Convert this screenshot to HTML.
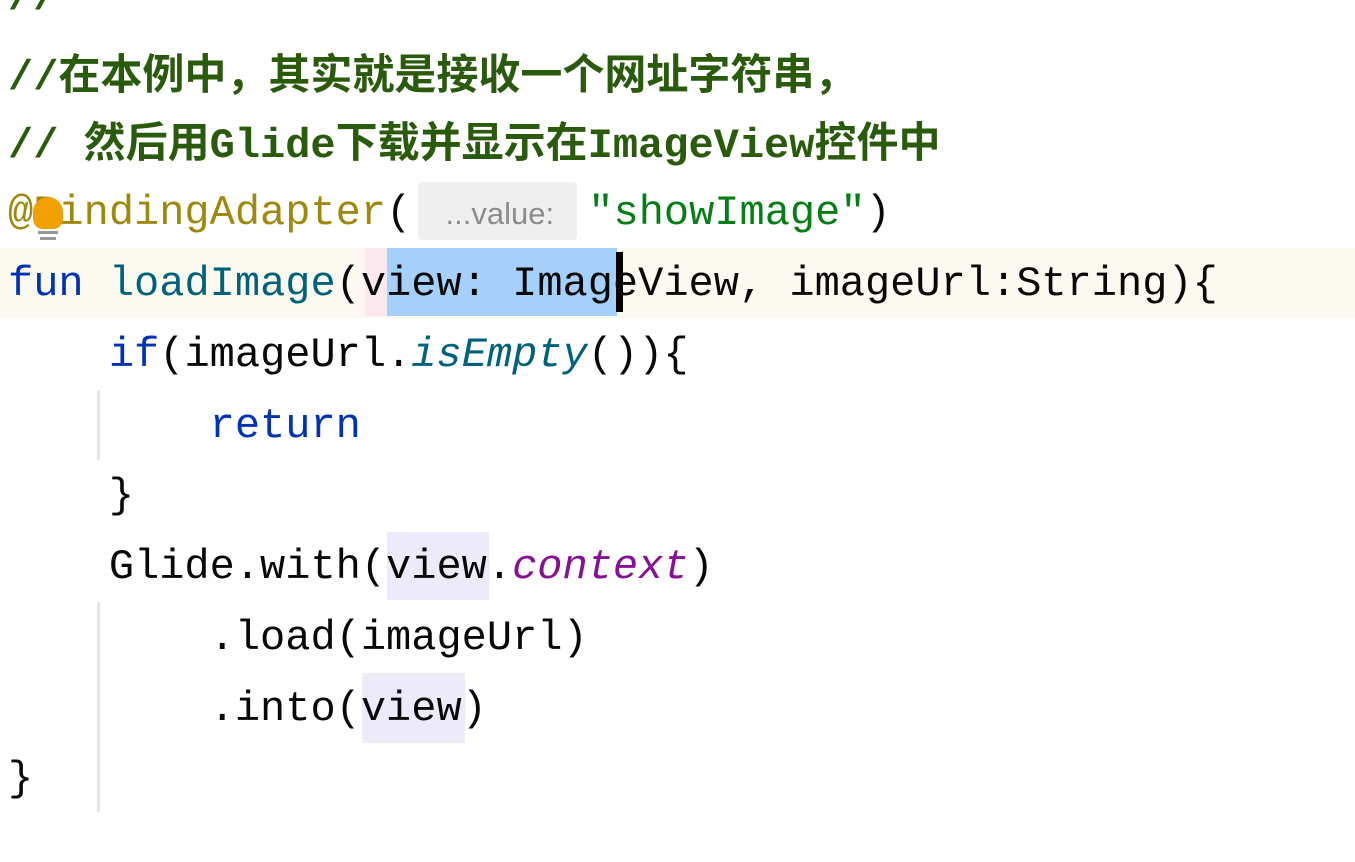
<!DOCTYPE html>
<html><head><meta charset="utf-8"><style>
html,body{margin:0;padding:0;background:#fff;width:1355px;height:862px;overflow:hidden;position:relative}
.l{position:absolute;left:8px;height:71px;line-height:71px;font-family:"Liberation Mono","Noto Sans CJK SC",monospace;font-size:42px;color:#080808;white-space:pre}
.c{color:#2a5a0c;font-weight:bold}
.k{color:#0033b3}.f{color:#00627a}.a{color:#9e880d}.s{color:#067d17}
.i{font-style:italic}.p{color:#871094;font-style:italic}
.bx{position:absolute}
</style></head><body>
<div class="bx" style="left:0;top:248px;width:1355px;height:70px;background:#fcfaf0"></div>
<div class="bx" style="left:365px;top:248px;width:22px;height:68px;background:#fce8ee"></div>
<div class="bx" style="left:387px;top:248px;width:230px;height:68px;background:#a6d0fc"></div>
<div class="bx" style="left:616px;top:252px;width:7px;height:60px;background:#000"></div>
<div class="bx" style="left:418px;top:182px;width:159px;height:58px;background:#efefef;border-radius:4px"></div>
<div class="bx" style="left:387px;top:532px;width:102px;height:68px;background:#edebfa"></div>
<div class="bx" style="left:362px;top:673px;width:103px;height:70px;background:#edebfa"></div>
<div class="bx" style="left:97px;top:390px;width:3px;height:70px;background:#e6e6e6"></div>
<div class="bx" style="left:97px;top:602px;width:3px;height:210px;background:#e6e6e6"></div>

<div class="l c" style="top:-37px">//</div>
<div class="l c" style="top:43px">//在本例中，其实就是接收一个网址字符串，</div>
<div class="l c" style="top:111px">// 然后用Glide下载并显示在ImageView控件中</div>
<div class="l" style="top:178px"><span class="a">@BindingAdapter</span>(<span style="display:inline-block;width:177px;font-family:'Liberation Sans',sans-serif;font-size:31px;color:#8c8c8c;text-align:center">...value:</span><span class="s">"showImage"</span>)</div>
<div class="bx" style="left:33px;top:197px;width:30px;height:32px;background:#f0a000;border-radius:15px 15px 10px 10px"></div>
<div class="bx" style="left:38px;top:231px;width:20px;height:3px;background:#999"></div>
<div class="bx" style="left:40px;top:237px;width:16px;height:3px;background:#999"></div>
<div class="l" style="top:249px"><span class="k">fun</span> <span class="f">loadImage</span>(view: ImageView, imageUrl:String){</div>
<div class="l" style="top:320px">    <span class="k">if</span>(imageUrl.<span class="f i">isEmpty</span>()){</div>
<div class="l" style="top:391px">        <span class="k">return</span></div>
<div class="l" style="top:461px">    }</div>
<div class="l" style="top:532px">    Glide.with(view.<span class="p">context</span>)</div>
<div class="l" style="top:603px">        .load(imageUrl)</div>
<div class="l" style="top:674px">        .into(view)</div>
<div class="l" style="top:744px">}</div>
</body></html>
